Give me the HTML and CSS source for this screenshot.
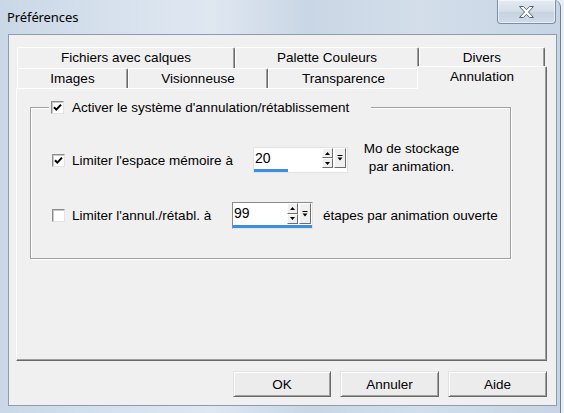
FILE: index.html
```html
<!DOCTYPE html>
<html lang="fr">
<head>
<meta charset="utf-8">
<title>Préférences</title>
<link rel="stylesheet" href="styles.css">
</head>
<body>
<div class="window">
  <div class="titlebar">
    <span class="title">Préférences</span>
    <div class="close">
      <svg width="17" height="14" viewBox="0 0 17 14"><path d="M1.5 1.5h4l3 3.2 3-3.2h4l-5 5.5 5 5.5h-4l-3-3.2-3 3.2h-4l5-5.5z" fill="#fff" stroke="#55667a" stroke-width="1" stroke-linejoin="round"/></svg>
    </div>
  </div>
  <div class="client">
    <div class="tabctl">
      <div class="tabrow row-back">
        <div class="tab t-fichiers">Fichiers avec calques</div>
        <div class="tab t-palette">Palette Couleurs</div>
        <div class="tab t-divers">Divers</div>
      </div>
      <div class="tabrow row-front">
        <div class="tab t-images">Images</div>
        <div class="tab t-vision">Visionneuse</div>
        <div class="tab t-transp">Transparence</div>
        <div class="tab t-annul selected">Annulation</div>
      </div>
      <div class="panel">
        <div class="group">
          <div class="legend">
            <span class="cb checked"><svg width="9" height="9" viewBox="0 0 9 9"><path d="M1 4.2l2.3 2.4L8 1.6" fill="none" stroke="#000" stroke-width="2"/></svg></span>
            <span>Activer le système d'annulation/rétablissement</span>
          </div>
          <div class="opt opt1">
            <span class="cb checked"><svg width="9" height="9" viewBox="0 0 9 9"><path d="M1 4.2l2.3 2.4L8 1.6" fill="none" stroke="#000" stroke-width="2"/></svg></span>
            <span class="lbl lbl1">Limiter l'espace mémoire à</span>
            <div class="spin spin1">
              <div class="spin-top">
                <span class="spin-val">20</span>
                <div class="spin-ud">
                  <span class="ud"><svg width="5" height="3" viewBox="0 0 5 3"><path d="M0 3L2.5 0 5 3z" fill="#000"/></svg></span>
                  <span class="ud"><svg width="5" height="3" viewBox="0 0 5 3"><path d="M0 0L2.5 3 5 0z" fill="#000"/></svg></span>
                </div>
                <span class="drop"><svg width="6" height="6" viewBox="0 0 6 6"><path d="M0.5 0.5h5" stroke="#000" stroke-width="1"/><path d="M0.5 2.5L3 5.5 5.5 2.5z" fill="#000"/></svg></span>
              </div>
              <div class="track"><span class="fill" style="width:37%"></span></div>
            </div>
            <span class="note note1">Mo de stockage<br>par animation.</span>
          </div>
          <div class="opt opt2">
            <span class="cb"></span>
            <span class="lbl lbl2">Limiter l'annul./rétabl. à</span>
            <div class="spin spin2">
              <div class="spin-top">
                <span class="spin-val">99</span>
                <div class="spin-ud">
                  <span class="ud"><svg width="5" height="3" viewBox="0 0 5 3"><path d="M0 3L2.5 0 5 3z" fill="#000"/></svg></span>
                  <span class="ud"><svg width="5" height="3" viewBox="0 0 5 3"><path d="M0 0L2.5 3 5 0z" fill="#000"/></svg></span>
                </div>
                <span class="drop"><svg width="6" height="6" viewBox="0 0 6 6"><path d="M0.5 0.5h5" stroke="#000" stroke-width="1"/><path d="M0.5 2.5L3 5.5 5.5 2.5z" fill="#000"/></svg></span>
              </div>
              <div class="track"><span class="fill" style="width:100%"></span></div>
            </div>
            <span class="note note2">étapes par animation ouverte</span>
          </div>
        </div>
      </div>
    </div>
    <div class="buttons">
      <button class="btn">OK</button>
      <button class="btn">Annuler</button>
      <button class="btn">Aide</button>
    </div>
  </div>
</div>
</body>
</html>
```

FILE: styles.css
```css
html, body {
  margin: 0;
  padding: 0;
  background: #e9eef4;
}
body {
  width: 564px;
  height: 413px;
  overflow: hidden;
  font-family: "Liberation Sans", Arial, sans-serif;
  font-size: 13.5px;
  color: #000;
}
.window {
  width: 560px;
  height: 413px;
  border-right: 1px solid #6f7f93;
  border-top-right-radius: 7px;
  background: linear-gradient(90deg, #cad7e6 0%, #d6e1ed 20%, #dfe7f1 38%, #c9d6e5 55%, #d3deea 75%, #c6d4e4 100%);
  display: flex;
  flex-direction: column;
  overflow: hidden;
}
.titlebar {
  height: 34px;
  display: flex;
  align-items: flex-start;
  flex: none;
}
.title {
  font-family: "Noto Sans", "Open Sans", sans-serif;
  font-size: 13px;
  letter-spacing: -0.1px;
  margin: 8px 0 0 7px;
  color: #000;
}
.close {
  margin-left: auto;
  margin-right: 4px;
  width: 57px;
  height: 23px;
  border: 1px solid #7e8ea2;
  border-top: none;
  border-radius: 0 0 4px 4px;
  background: linear-gradient(#e4ebf3, #d3dde9 50%, #c6d2e0 51%, #d0dbe8);
  box-shadow: inset 0 0 0 1px rgba(255,255,255,0.55);
  display: flex;
  align-items: center;
  justify-content: center;
}
.close svg { display: block; }
.client {
  margin: 0 3px 0 8px;
  height: 372px;
  box-sizing: border-box;
  border: 1px solid #8a9cb1;
  background: #f0f0f0;
  padding: 12px 0 0 7px;
  display: flex;
  flex-direction: column;
}
.tabctl {
  width: 531px;
}
.tabrow {
  display: flex;
  padding-left: 1px;
}
.row-back { height: 21px; }
.row-front { height: 20px; }
.tab {
  box-sizing: border-box;
  height: 100%;
  border-top: 1px solid #fff;
  border-left: 1px solid #fff;
  border-right: 1px solid #696969;
  box-shadow: inset -1px 0 0 #a0a0a0;
  border-radius: 2px 2px 0 0;
  background: #f0f0f0;
  display: flex;
  align-items: center;
  justify-content: center;
  padding-bottom: 1px;
}
.t-fichiers { width: 218px; }
.t-palette { width: 184px; }
.t-divers { width: 126px; }
.t-images { width: 111px; }
.t-vision { width: 140px; }
.t-transp { width: 151px; }
.t-annul { width: 126px; }
.tab.selected {
  position: relative;
  z-index: 1;
  width: 130px;
  height: 23px;
  margin: -2px -2px 0 -2px;
  padding-bottom: 4px;
}
.panel {
  box-sizing: border-box;
  height: 273px;
  border-top: 1px solid #fff;
  border-left: 1px solid #fff;
  border-right: 1px solid #696969;
  border-bottom: 1px solid #696969;
  box-shadow: inset -1px -1px 0 #a0a0a0;
  padding: 18px 0 0 13px;
}
.group {
  box-sizing: border-box;
  width: 481px;
  height: 152px;
  border: 1px solid #a0a0a0;
  box-shadow: 1px 1px 0 #fff, inset 1px 1px 0 #fff;
  padding: 0 0 0 21px;
}
.legend {
  display: flex;
  align-items: center;
  width: fit-content;
  height: 15px;
  margin: -8px 0 0 -3px;
  padding: 0 22px 0 2px;
  background: #f0f0f0;
  gap: 8px;
}
.cb {
  box-sizing: border-box;
  width: 13px;
  height: 13px;
  flex: none;
  background: #fff;
  border: 1px solid;
  border-color: #8e8e8e #e3e3e3 #e3e3e3 #8e8e8e;
  box-shadow: inset 1px 1px 0 #c8c8c8;
  display: flex;
  align-items: center;
  justify-content: center;
}
.cb svg { display: block; }
.opt {
  display: flex;
  align-items: center;
}
.opt1 {
  margin-top: 32px;
  height: 26px;
}
.opt2 {
  margin-top: 29px;
  height: 27px;
}
.lbl { margin-left: 7px; }
.lbl1 { width: 181px; }
.lbl2 { width: 160px; }
.spin {
  box-sizing: border-box;
  background: #fff;
  display: flex;
  flex-direction: column;
  height: 100%;
}
.spin1 {
  width: 95px;
  border: 1px solid #e2e2e2;
}
.spin2 {
  width: 81px;
  border: 1px solid;
  border-color: #8a8a8a #e3e3e3 #e3e3e3 #8a8a8a;
}
.spin-top {
  flex: 1;
  display: flex;
  align-items: stretch;
  padding: 0 1px 1px 0;
}
.spin-val {
  flex: 1;
  font-size: 14px;
  padding: 2px 0 0 1px;
}
.spin-ud {
  display: flex;
  flex-direction: column;
  width: 11px;
}
.ud, .drop {
  box-sizing: border-box;
  background: #f0f0f0;
  border: 1px solid;
  border-color: #fff #6d6d6d #6d6d6d #fff;
  display: flex;
  align-items: center;
  justify-content: center;
}
.ud { flex: 1; }
.ud svg, .drop svg { display: block; }
.drop { width: 12px; margin-left: 1px; }
.track {
  height: 3px;
  flex: none;
  background: #fff;
  display: flex;
}
.fill {
  display: block;
  height: 3px;
  background: #3a8ee3;
}
.note1 {
  margin: -5px 0 0 15px;
  text-align: center;
  line-height: 18px;
  width: 97px;
}
.note2 {
  margin-left: 10px;
}
.buttons {
  display: flex;
  justify-content: flex-end;
  gap: 9px;
  margin-top: 10px;
  padding-right: 9px;
}
.btn {
  box-sizing: border-box;
  width: 99px;
  height: 26px;
  font-family: "Liberation Sans", Arial, sans-serif;
  font-size: 13.5px;
  color: #000;
  background: #ececec;
  border: 1px solid;
  border-color: #e3e3e3 #696969 #696969 #e3e3e3;
  box-shadow: inset 1px 1px 0 #fff, inset -1px -1px 0 #a0a0a0;
  padding: 0;
  margin: 0;
}
.btn:first-child { width: 98px; }
```
